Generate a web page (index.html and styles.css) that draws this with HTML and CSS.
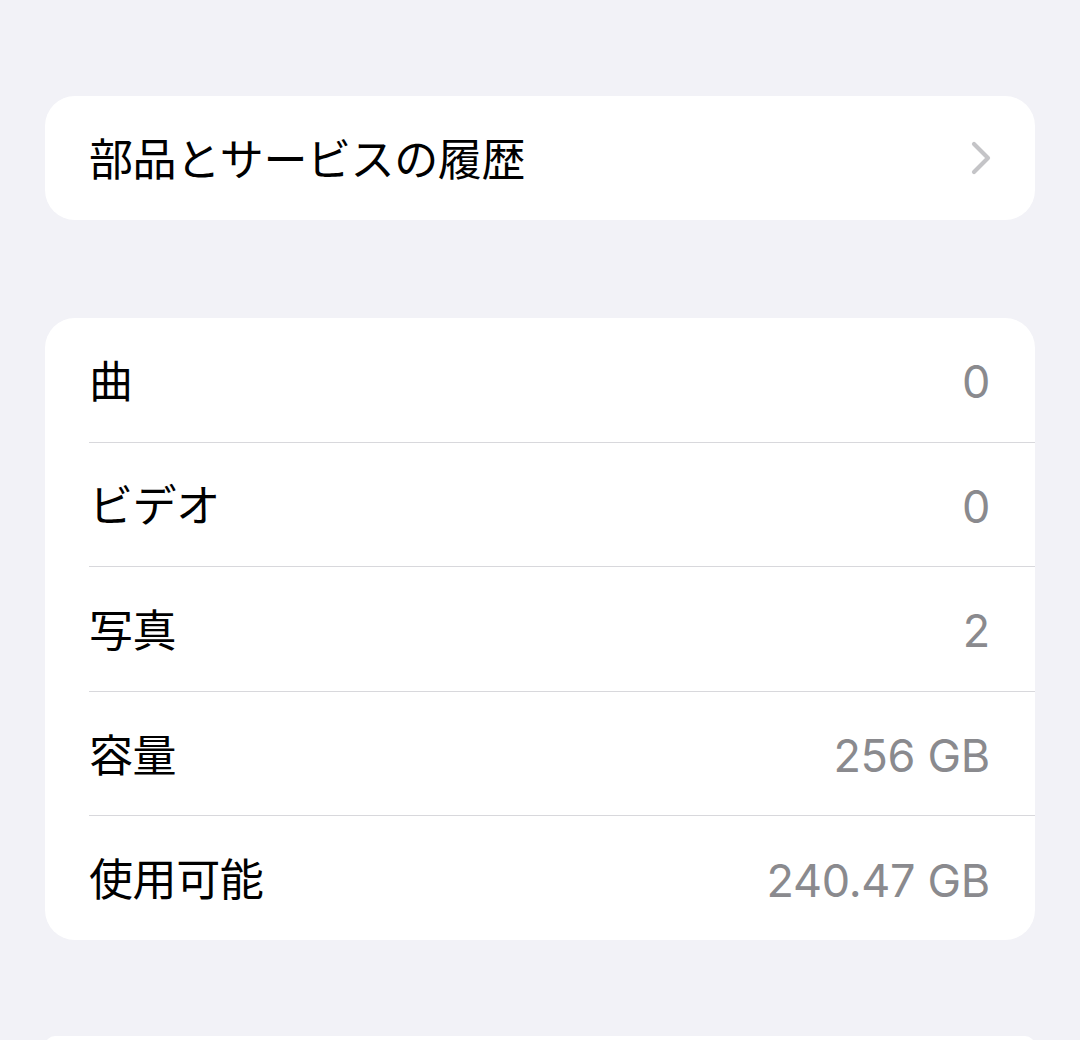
FILE: index.html
```html
<!DOCTYPE html>
<html lang="ja">
<head>
<meta charset="utf-8">
<title>情報</title>
<link rel="stylesheet" href="styles.css">
</head>
<body>
<main class="page">
  <section class="card">
    <div class="row link-row">
      <span class="label">部品とサービスの履歴</span>
      <svg class="chevron" width="20" height="34" viewBox="0 0 20 34" aria-hidden="true">
        <path d="M3 3 L17 17 L3 31" fill="none" stroke="#c4c4c7" stroke-width="4.2" stroke-linecap="round" stroke-linejoin="round"/>
      </svg>
    </div>
  </section>

  <section class="card">
    <div class="row"><div class="row-inner"><span class="label">曲</span><span class="value">0</span></div></div>
    <div class="row"><div class="row-inner"><span class="label">ビデオ</span><span class="value">0</span></div></div>
    <div class="row"><div class="row-inner"><span class="label">写真</span><span class="value">2</span></div></div>
    <div class="row"><div class="row-inner"><span class="label">容量</span><span class="value">256 GB</span></div></div>
    <div class="row"><div class="row-inner"><span class="label">使用可能</span><span class="value">240.47 GB</span></div></div>
  </section>

  <section class="card card-peek"></section>
</main>
</body>
</html>
```

FILE: styles.css
```css
html, body {
  margin: 0;
  padding: 0;
  background: #f2f2f7;
  height: 1040px;
  overflow: hidden;
}

body {
  font-family: "Noto Sans CJK JP", "Noto Sans", sans-serif;
  color: #000;
}

.page {
  display: flex;
  flex-direction: column;
  gap: 98px;
  padding: 96px 45px 0;
}

.card {
  background: #fff;
  border-radius: 30px;
  overflow: hidden;
}

.card-peek {
  height: 20px;
  margin-top: -2px;
}

.row {
  padding-left: 44px;
}

.link-row {
  display: flex;
  align-items: center;
  justify-content: space-between;
  height: 124px;
  padding-right: 45px;
  box-sizing: border-box;
}

.row-inner {
  display: flex;
  align-items: center;
  justify-content: space-between;
  height: 124.6px;
  box-sizing: border-box;
  padding-right: 45px;
  border-bottom: 1px solid #d8d8dc;
}

.row:last-child .row-inner {
  border-bottom: none;
  height: 124px;
}

.label {
  font-size: 44px;
  font-weight: 400;
  letter-spacing: -0.4px;
  line-height: 1;
  position: relative;
  top: -1px;
}

.value {
  font-family: "Inter", "Liberation Sans", sans-serif;
  font-size: 45px;
  color: #8a8a8e;
  letter-spacing: -0.3px;
  line-height: 1;
  position: relative;
  top: 2px;
}

.chevron {
  display: block;
  margin-right: -1px;
}
```
